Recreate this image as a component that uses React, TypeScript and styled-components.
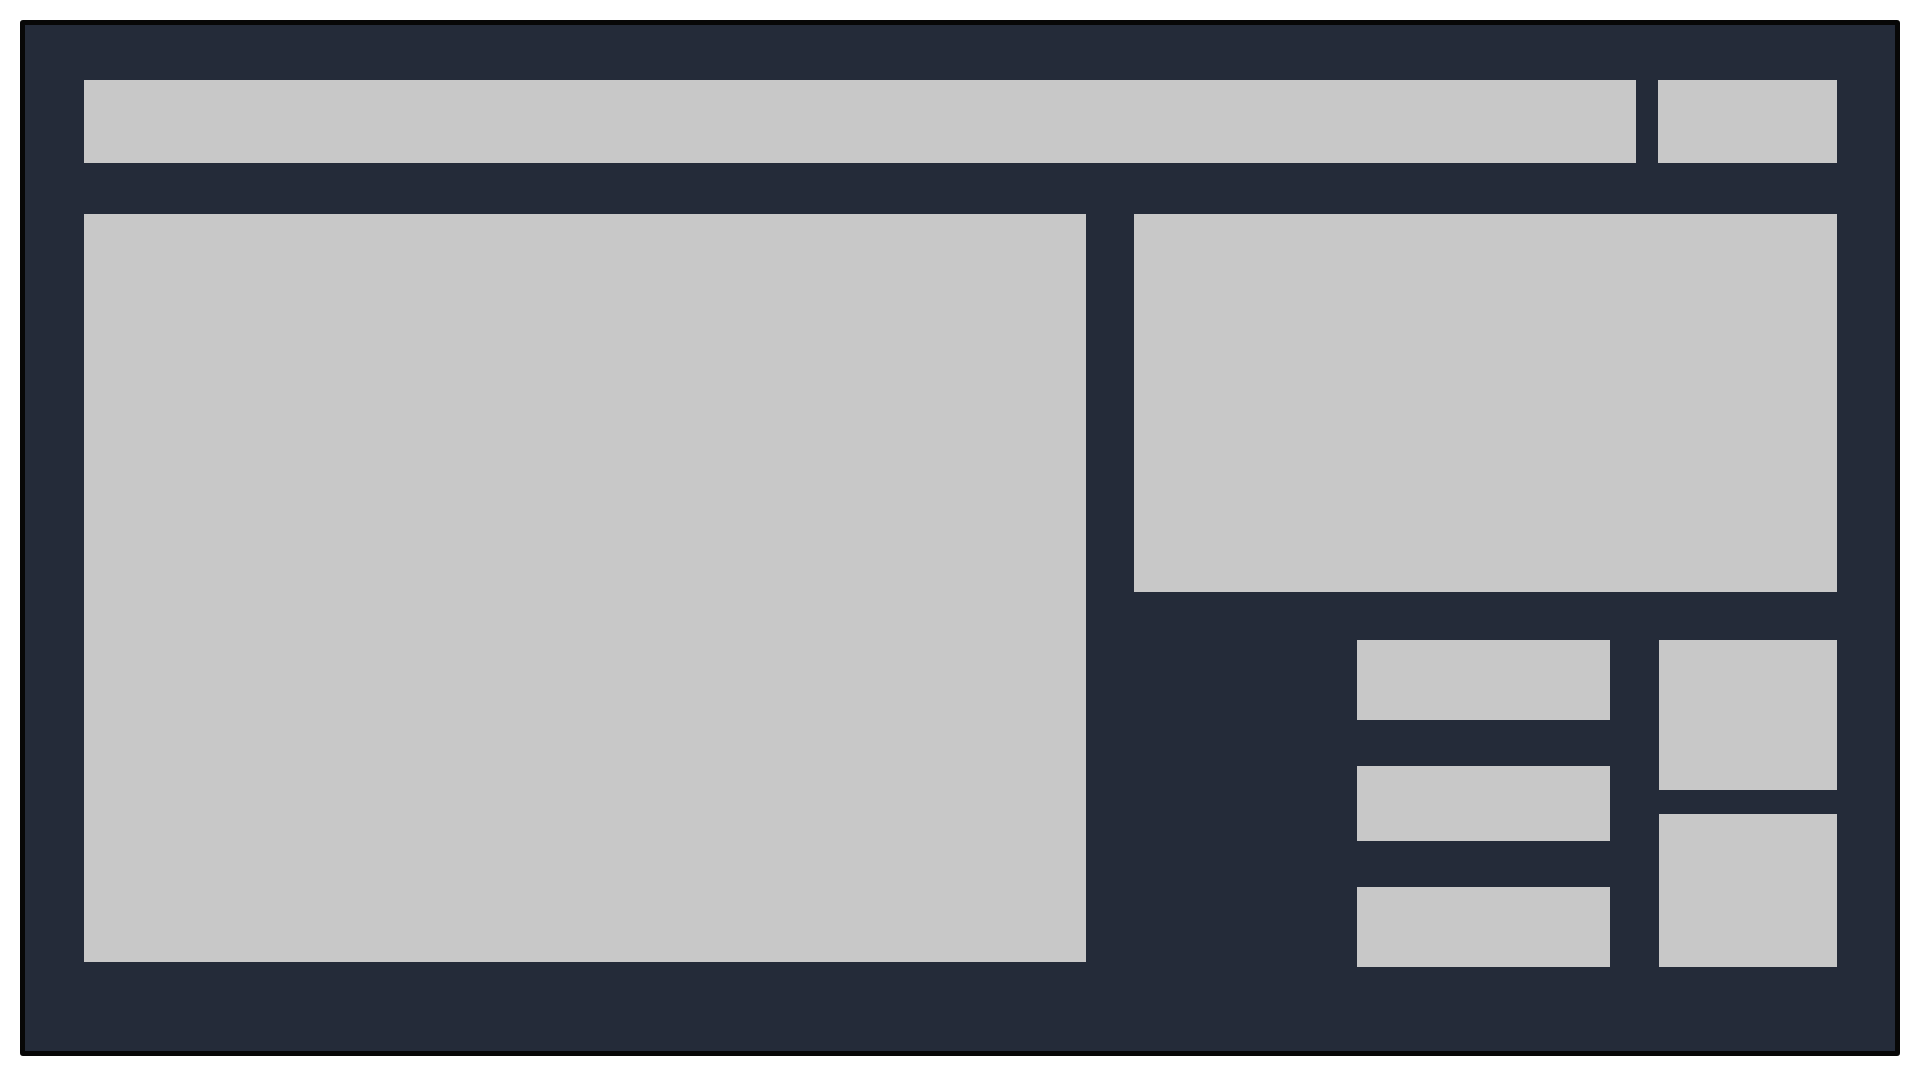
import styled, { createGlobalStyle } from 'styled-components'

const GlobalStyle = createGlobalStyle`
  html, body {
    margin: 0;
    padding: 0;
    background: #ffffff;
    font-family: 'Liberation Sans', Arial, sans-serif;
  }
`

const Page = styled.div`
  padding: 20px 18px 24px 20px;
`

const Frame = styled.div`
  box-sizing: border-box;
  width: 1880px;
  height: 1036px;
  border: 5px solid #070707;
  border-radius: 3px;
  background: #242b39;
  padding: 55px 58px 0 59px;
  display: flex;
  flex-direction: column;
`

const TopRow = styled.div`
  display: flex;
  gap: 22px;
  height: 83px;
`

const Block = styled.div<{ $h?: number; $w?: number }>`
  background: #c8c8c8;
  ${(p) => (p.$h ? `height: ${p.$h}px;` : '')}
  ${(p) => (p.$w ? `width: ${p.$w}px; flex: none;` : '')}
`

const SearchBar = styled(Block)`
  flex: 1;
`

const Main = styled.div`
  margin-top: 51px;
  display: grid;
  grid-template-columns: 1002px 1fr;
  gap: 48px;
  align-items: start;
`

const SideColumn = styled.div`
  display: flex;
  flex-direction: column;
  gap: 48px;
`

const Widgets = styled.div`
  display: flex;
  justify-content: flex-end;
  gap: 49px;
`

const Stack = styled.div<{ $gap: number; $w: number }>`
  display: flex;
  flex-direction: column;
  gap: ${(p) => p.$gap}px;
  width: ${(p) => p.$w}px;
`

const App = () => {
  return (
    <>
      <GlobalStyle />
      <Page>
        <Frame>
          <TopRow>
            <SearchBar />
            <Block $w={179} />
          </TopRow>
          <Main>
            <Block $h={748} />
            <SideColumn>
              <Block $h={378} />
              <Widgets>
                <Stack $gap={46} $w={253}>
                  <Block $h={80} />
                  <Block $h={75} />
                  <Block $h={80} />
                </Stack>
                <Stack $gap={24} $w={178}>
                  <Block $h={150} />
                  <Block $h={153} />
                </Stack>
              </Widgets>
            </SideColumn>
          </Main>
        </Frame>
      </Page>
    </>
  )
}

export default App
